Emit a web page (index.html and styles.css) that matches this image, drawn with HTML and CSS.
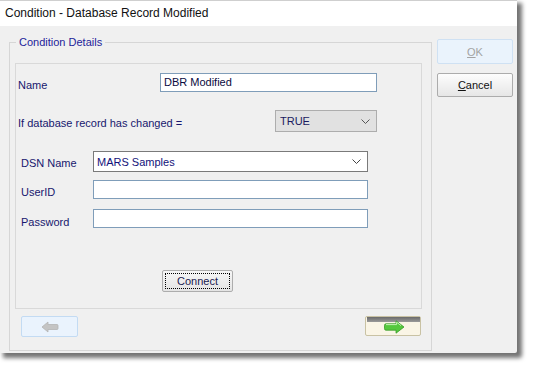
FILE: index.html
```html
<!DOCTYPE html>
<html>
<head>
<meta charset="utf-8">
<link rel="stylesheet" href="styles.css">
</head>
<body>
<div class="window">
  <div class="titlebar">Condition - Database Record Modified</div>
  <div class="client">
    <div class="group">
      <span class="legend">Condition Details</span>
      <div class="panel">
        <div class="row r1">
          <span class="label name-label">Name</span>
          <div class="textbox name-box">DBR Modified</div>
        </div>
        <div class="row r2">
          <span class="label cond-label">If database record has changed =</span>
          <div class="combo true-combo"><span>TRUE</span>
            <svg class="chev" width="9" height="5" viewBox="0 0 9 5"><polyline points="0.5,0.5 4.5,4.5 8.5,0.5" fill="none" stroke="#555" stroke-width="1"/></svg>
          </div>
        </div>
        <div class="row r3">
          <span class="label dsn-label">DSN Name</span>
          <div class="combo dsn-combo"><span>MARS Samples</span>
            <svg class="chev" width="9" height="5" viewBox="0 0 9 5"><polyline points="0.5,0.5 4.5,4.5 8.5,0.5" fill="none" stroke="#444" stroke-width="1"/></svg>
          </div>
        </div>
        <div class="row r4">
          <span class="label dsn-label low">UserID</span>
          <div class="textbox wide-box"></div>
        </div>
        <div class="row r5">
          <span class="label dsn-label lower">Password</span>
          <div class="textbox wide-box"></div>
        </div>
        <div class="row r6">
          <div class="connect"><span>Connect</span></div>
        </div>
      </div>
      <div class="navrow">
        <div class="navbtn back">
          <svg width="18" height="12" viewBox="0 0 18 12">
            <path d="M1 6 L7 1 L7 3.5 L16 3.5 Q17 3.5 17 4.5 L17 7.5 Q17 8.5 16 8.5 L7 8.5 L7 11 Z" fill="#c4c4c4" stroke="#b4b4b4" stroke-width="0.8"/>
          </svg>
        </div>
        <div class="navbtn next">
          <div class="next-top"></div>
          <svg class="next-arrow" width="22" height="14" viewBox="0 0 22 14">
            <path d="M21 7 L13 0.8 L13 3.8 L3 3.8 Q1.5 3.8 1.5 5.3 L1.5 8.7 Q1.5 10.2 3 10.2 L13 10.2 L13 13.2 Z" fill="#55c83e" stroke="#3a9a2a" stroke-width="0.8"/>
            <path d="M3 4.6 L13.6 4.6 L13.6 2.2 L18 5.6" fill="none" stroke="#c4f4b4" stroke-width="1"/>
          </svg>
        </div>
      </div>
    </div>
    <div class="side">
      <div class="btn ok"><u>O</u>K</div>
      <div class="btn cancel"><u>C</u>ancel</div>
    </div>
  </div>
</div>
</body>
</html>
```
FILE: styles.css
```css
html, body {
  margin: 0;
  padding: 0;
  background: #ffffff;
}
body {
  width: 533px;
  height: 370px;
  overflow: hidden;
  font-family: "Liberation Sans", Arial, sans-serif;
  font-size: 11px;
}
.window {
  width: 517px;
  height: 353px;
  background: #f0f0f0;
  border-top: 1px solid #cfcfcf;
  box-sizing: border-box;
  box-shadow: 4px 4px 4px 1px rgba(0,0,0,0.55);
  border-bottom-right-radius: 2px;
  display: flex;
  flex-direction: column;
}
.titlebar {
  height: 25px;
  background: #ffffff;
  font-family: "Liberation Sans", Arial, sans-serif;
  font-size: 12px;
  color: #111;
  padding-left: 5px;
  line-height: 25px;
  flex: none;
}
.client {
  display: flex;
  flex: 1;
}
.group {
  position: relative;
  margin-top: 16px;
  margin-left: 9px;
  width: 423px;
  height: 309px;
  box-sizing: border-box;
  border: 1px solid #d6d6d6;
  padding: 20px 9px 0 5px;
}
.legend {
  position: absolute;
  left: 6px;
  top: -8px;
  padding: 0 3px;
  background: #f0f0f0;
  color: #23239a;
  font-size: 11px;
  line-height: 14px;
}
.panel {
  width: 407px;
  height: 246px;
  box-sizing: border-box;
  border: 1px solid #d9d9d9;
  padding-top: 9px;
}
.row {
  display: flex;
  align-items: center;
}
.label {
  color: #17176e;
  font-size: 11px;
}
.r1 { height: 19px; }
.r2 { height: 22px; margin-top: 18px; }
.r3 { height: 21px; margin-top: 19px; }
.r4 { height: 19px; margin-top: 8px; }
.r5 { height: 19px; margin-top: 10px; }
.r6 { height: 22px; margin-top: 42px; }
.name-label {
  margin-left: 2px;
  width: 142px;
  padding-top: 4px;
}
.cond-label {
  margin-left: 2px;
  width: 257px;
  padding-top: 3px;
}
.dsn-label {
  margin-left: 5px;
  width: 72px;
  padding-top: 3px;
}
.dsn-label.low { padding-top: 5px; }
.dsn-label.lower { padding-top: 6px; }
.textbox {
  height: 19px;
  box-sizing: border-box;
  border: 1px solid #7f9db9;
  background: #fff;
  color: #0a0a40;
  padding-left: 3px;
  line-height: 17px;
}
.name-box { width: 217px; }
.wide-box { width: 275px; }
.combo {
  display: flex;
  align-items: center;
  justify-content: space-between;
  box-sizing: border-box;
}
.true-combo {
  width: 102px;
  height: 22px;
  background: #e1e1e1;
  border: 1px solid #adadad;
  color: #1a1a60;
  padding: 0 6px 0 4px;
}
.dsn-combo {
  width: 275px;
  height: 21px;
  background: #fff;
  border: 1px solid #7a7a7a;
  color: #12127a;
  padding: 0 6px 0 3px;
}
.chev { display: block; }
.connect {
  margin-left: 146px;
  width: 71px;
  height: 22px;
  box-sizing: border-box;
  border: 1px solid #adadad;
  border-radius: 2px;
  background: linear-gradient(#f6f6f6, #e4e4e4);
  padding: 2px;
}
.connect span {
  display: flex;
  align-items: center;
  justify-content: center;
  height: 100%;
  box-sizing: border-box;
  border: 1px dotted #000;
  color: #1a1a50;
  font-size: 11px;
}
.navrow {
  display: flex;
  justify-content: space-between;
  margin-top: 7px;
  padding-left: 6px;
  padding-right: 1px;
}
.navbtn {
  box-sizing: border-box;
  border-radius: 2px;
}
.back {
  width: 57px;
  height: 21px;
  background: #eaf3fd;
  border: 1px solid #c3dbf3;
  display: flex;
  align-items: center;
  justify-content: center;
}
.next {
  width: 56px;
  height: 20px;
  background: #faf5e6;
  border: 1px solid #c9c2a4;
  position: relative;
  display: flex;
  align-items: center;
  justify-content: center;
}
.next-top {
  position: absolute;
  left: 1px;
  right: 0;
  top: 0;
  height: 5px;
  background: linear-gradient(#6a6a6a, #9a9a9a);
}
.next-arrow {
  position: relative;
  margin-left: 2px;
  margin-top: 1px;
}
.side {
  margin-left: 5px;
  margin-top: 13px;
  display: flex;
  flex-direction: column;
}
.btn {
  width: 76px;
  box-sizing: border-box;
  border-radius: 2px;
  display: flex;
  align-items: center;
  justify-content: center;
  font-size: 11px;
}
.ok {
  height: 25px;
  background: #eaf3fc;
  border: 1px solid #cfe1f3;
  color: #a3a3a3;
}
.cancel {
  height: 24px;
  margin-top: 9px;
  background: linear-gradient(#fdfdfd, #e6e6e6);
  border: 1px solid #acacac;
  color: #111;
}
```
